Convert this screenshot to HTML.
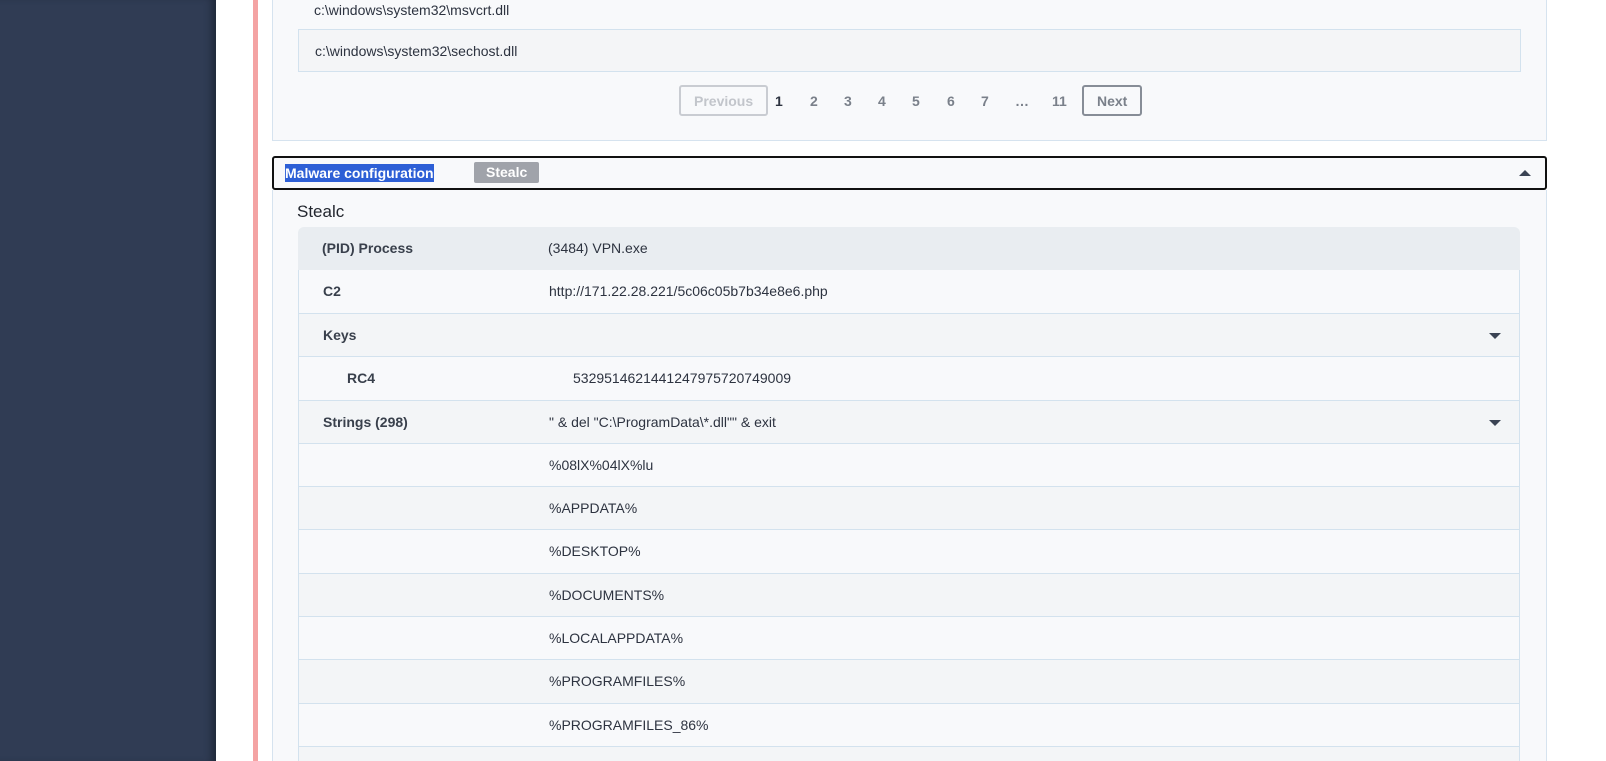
<!DOCTYPE html>
<html style="width:1606px;height:761px;overflow:hidden"><head><style>
*{margin:0;padding:0;box-sizing:border-box}
body{width:1606px;height:761px;overflow:hidden;background:#fff;font-family:"Liberation Sans",sans-serif;font-size:14px;color:#2d3340;position:relative}
.sb{position:absolute;left:0;top:0;width:216px;height:761px;background:#303c54;box-shadow:inset -8px 0 8px -4px #1f2838}
.pink{position:absolute;left:253px;top:0;width:5px;height:761px;background:#f4a3a3}
.panel{position:absolute;left:272px;top:-2px;width:1275px;height:143px;background:#f8f9fb;border:1px solid #d6e3ef;border-top:none}
.t1{position:absolute;left:314px;top:2px}
.box1{position:absolute;left:298px;top:29px;width:1223px;height:43px;background:#f4f5f7;border:1px solid #d3e2ee;padding:13px 16px}
.pg{position:absolute;top:85px;height:31px;font-weight:bold;color:#7a808a;line-height:29px;font-size:14px;border:2px solid transparent}
.btn{border:2px solid #c9ccd2;border-radius:3px;padding:0 13px}
.hdr{position:absolute;left:272px;top:156px;width:1275px;height:34px;border:2px solid #111;border-radius:3px;background:#f8f9fb}
.sel{position:absolute;left:11px;top:6px;background:#2d5fd6;color:#fff;font-weight:bold;font-size:14px;line-height:18px;padding:0}
.tag{position:absolute;left:200px;top:4px;background:#a0a3aa;color:#fff;font-weight:bold;border-radius:2px;padding:0 12px;line-height:21px}
.up{position:absolute;right:14px;top:12px;width:0;height:0;border-left:6px solid transparent;border-right:6px solid transparent;border-bottom:6px solid #3a4354}
.body2{position:absolute;left:272px;top:190px;width:1275px;height:571px;background:#f8f9fb;border-right:1px solid #d6e3ef;border-left:1px solid #d6e3ef}
h3{position:absolute;left:297px;top:202px;font-size:17px;font-weight:normal;color:#22262e}
.row{position:absolute;left:298px;width:1222px;height:44px;border-bottom:1px solid #d3e2ee;border-left:1px solid #d3e2ee;border-right:1px solid #d3e2ee}
.row .k{position:absolute;left:24px;top:13px;font-weight:bold;color:#39404c}
.row .v{position:absolute;left:250px;top:13px}
.a{background:#f8f9fb}.b{background:#f3f5f7}
.dn{position:absolute;right:18px;top:19px;width:0;height:0;border-left:6px solid transparent;border-right:6px solid transparent;border-top:6px solid #3a4354}
</style></head><body>
<div class="sb"></div>
<div class="pink"></div>
<div class="panel"></div>
<div class="t1">c:\windows\system32\msvcrt.dll</div>
<div class="box1">c:\windows\system32\sechost.dll</div>
<div class="pg btn" style="left:679px;color:#c2c5cb">Previous</div>
<div class="pg" style="left:773px;color:#2d3340">1</div>
<div class="pg" style="left:808px">2</div>
<div class="pg" style="left:842px">3</div>
<div class="pg" style="left:876px">4</div>
<div class="pg" style="left:910px">5</div>
<div class="pg" style="left:945px">6</div>
<div class="pg" style="left:979px">7</div>
<div class="pg" style="left:1013px">…</div>
<div class="pg" style="left:1050px">11</div>
<div class="pg btn" style="left:1082px;border-color:#878d97">Next</div>
<div class="body2"></div>
<div class="hdr"><span class="sel">Malware configuration</span><span class="tag">Stealc</span><div class="up"></div></div>
<h3>Stealc</h3>
<div class="row" style="top:227px;height:43px;background:#e9edf1;border:none;border-radius:6px 6px 0 0"><span class="k">(PID) Process</span><span class="v">(3484) VPN.exe</span></div>
<div class="row a" style="top:270px"><span class="k">C2</span><span class="v">http://171.22.28.221/5c06c05b7b34e8e6.php</span></div>
<div class="row b" style="top:314px;height:43px"><span class="k">Keys</span><div class="dn"></div></div>
<div class="row a" style="top:357px"><span class="k" style="left:48px">RC4</span><span class="v" style="left:274px">5329514621441247975720749009</span></div>
<div class="row b" style="top:401px;height:43px"><span class="k">Strings (298)</span><span class="v">" &amp; del "C:\ProgramData\*.dll"" &amp; exit</span><div class="dn"></div></div>
<div class="row a" style="top:444px;height:43px"><span class="v">%08lX%04lX%lu</span></div>
<div class="row b" style="top:487px;height:43px"><span class="v">%APPDATA%</span></div>
<div class="row a" style="top:530px;height:44px"><span class="v">%DESKTOP%</span></div>
<div class="row b" style="top:574px;height:43px"><span class="v">%DOCUMENTS%</span></div>
<div class="row a" style="top:617px;height:43px"><span class="v">%LOCALAPPDATA%</span></div>
<div class="row b" style="top:660px;height:44px"><span class="v">%PROGRAMFILES%</span></div>
<div class="row a" style="top:704px;height:43px"><span class="v">%PROGRAMFILES_86%</span></div>
<div class="row b" style="top:747px;height:14px;border-bottom:none"></div>
</body></html>
